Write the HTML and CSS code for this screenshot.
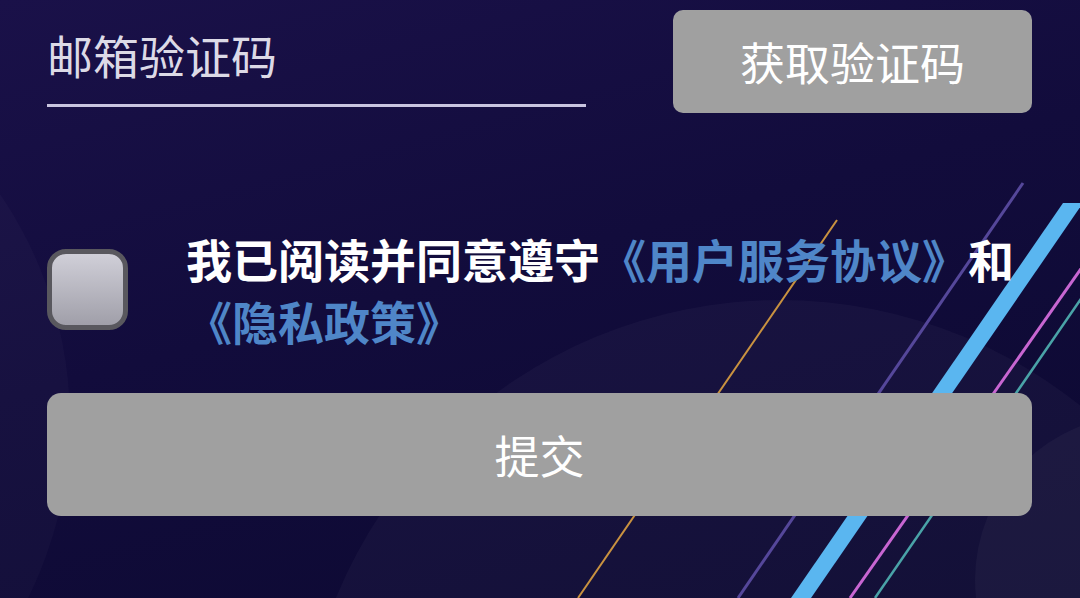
FILE: index.html
```html
<!DOCTYPE html>
<html lang="zh-CN">
<head>
<meta charset="utf-8">
<title>邮箱验证</title>
<link rel="stylesheet" href="styles.css">
</head>
<body>
<div class="page">
  <svg class="decor" width="1080" height="598" viewBox="0 0 1080 598" aria-hidden="true">
    <circle cx="-330" cy="420" r="400" fill="rgba(255,255,255,0.025)"/>
    <circle cx="780" cy="780" r="480" fill="rgba(255,255,255,0.03)"/>
    <circle cx="1140" cy="580" r="165" fill="rgba(255,255,255,0.035)"/>
    <line x1="837" y1="220" x2="578" y2="598" stroke="#c99240" stroke-width="2"/>
    <line x1="1023" y1="183" x2="738" y2="598" stroke="#55479a" stroke-width="3"/>
    <polygon points="1063,203 1083,203 811,598 791,598" fill="#5ab6f0"/>
    <line x1="1085" y1="263" x2="850" y2="598" stroke="#c866d2" stroke-width="3"/>
    <line x1="1085" y1="293" x2="875" y2="598" stroke="#4aa3a8" stroke-width="2.5"/>
  </svg>

  <main class="form">
    <div class="code-row">
      <label class="code-field">
        <span class="placeholder">邮箱验证码</span>
      </label>
      <button class="btn btn-code" type="button">获取验证码</button>
    </div>

    <div class="agree-row">
      <span class="checkbox"></span>
      <p class="agree-text">我已阅读并同意遵守<a class="link">《用户服务协议》</a>和<a class="link">《隐私政策》</a></p>
    </div>

    <button class="btn btn-submit" type="button">提交</button>
  </main>
</div>
</body>
</html>
```

FILE: styles.css
```css
* {
  box-sizing: border-box;
}

html, body {
  margin: 0;
  padding: 0;
}

body {
  width: 1080px;
  height: 598px;
  overflow: hidden;
  font-family: "Noto Sans CJK SC", "Noto Sans", sans-serif;
  color: #ffffff;
}

.page {
  position: relative;
  width: 1080px;
  height: 598px;
  overflow: hidden;
  background: linear-gradient(165deg, #1a1149 0%, #120c3c 45%, #0c0931 100%);
}

.decor {
  position: absolute;
  left: 0;
  top: 0;
}

.form {
  position: relative;
  display: flex;
  flex-direction: column;
  padding: 10px 48px 0 47px;
}

.code-row {
  display: flex;
  align-items: stretch;
  gap: 87px;
  height: 103px;
}

.code-field {
  width: 539px;
  display: flex;
  align-items: center;
  border-bottom: 3px solid #c9c5e0;
  height: 97px;
}

.placeholder {
  font-size: 46px;
  line-height: 1;
  color: #dcdae6;
  font-weight: 400;
  margin-top: -6px;
}

.btn {
  border: none;
  background: #a0a0a0;
  color: #ffffff;
  font-family: inherit;
  font-size: 45px;
  padding: 0;
}

.btn-code {
  flex: 1;
  border-radius: 10px;
}

.agree-row {
  display: flex;
  align-items: center;
  gap: 58px;
  margin-top: 114px;
}

.checkbox {
  flex: none;
  width: 81px;
  height: 81px;
  border: 5px solid #59585e;
  border-radius: 19px;
  background: linear-gradient(180deg, #d0cfd8 0%, #a09fa9 100%);
  margin-top: 0;
}

.agree-text {
  margin: 0;
  font-size: 46px;
  line-height: 62px;
  font-weight: 600;
  color: #ffffff;
}

.link {
  color: #4f86c8;
}

.btn-submit {
  margin-top: 42px;
  height: 123px;
  border-radius: 14px;
}
```
